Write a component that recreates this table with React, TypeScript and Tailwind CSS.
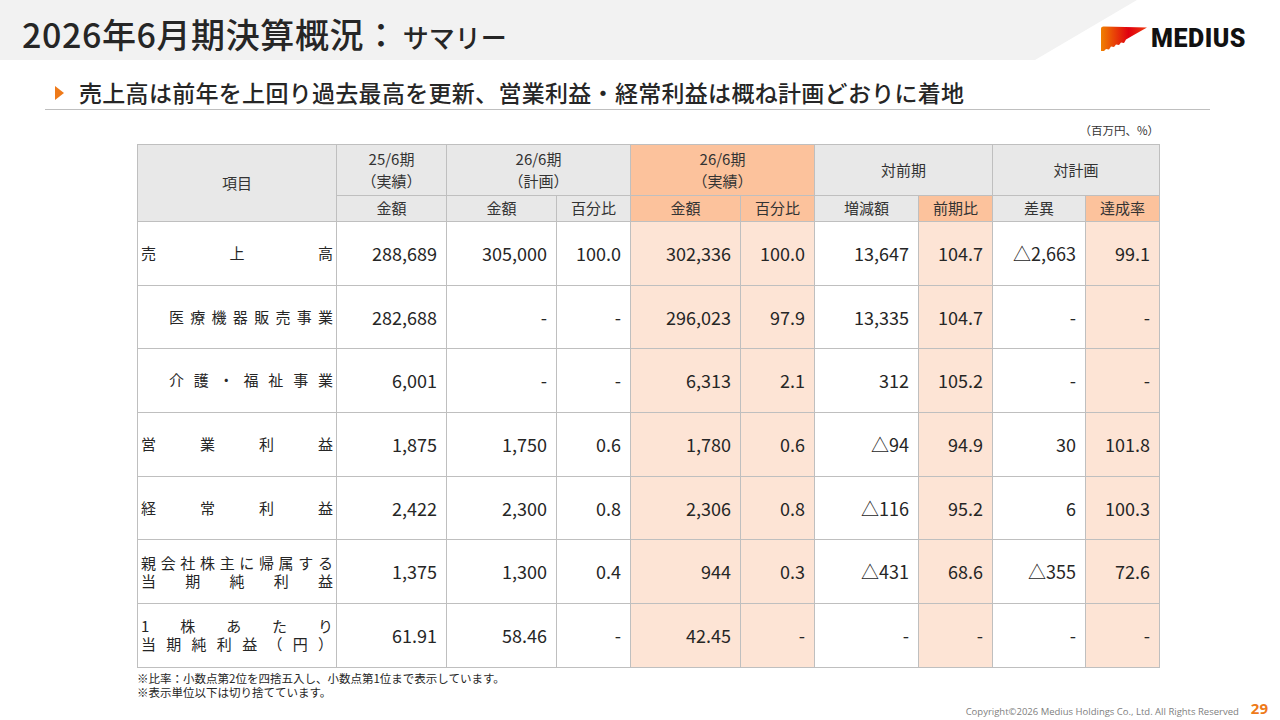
import React from "react";

const W = [199, 110, 110, 74, 110, 74, 104, 74, 93, 74];
const ORANGE_COLS = [3, 4, 6, 8];

type Row = { label: React.ReactNode; vals: string[] };

const Spread = ({ chars, className = "" }: { chars: string[]; className?: string }) => (
  <div className={`flex justify-between ${className}`}>
    {chars.map((c, i) => (
      <span key={i}>{c}</span>
    ))}
  </div>
);

const rows: Row[] = [
  { label: <Spread chars={["売", "上", "高"]} />, vals: ["288,689", "305,000", "100.0", "302,336", "100.0", "13,647", "104.7", "△2,663", "99.1"] },
  { label: <Spread className="pl-[28px]" chars={["医", "療", "機", "器", "販", "売", "事", "業"]} />, vals: ["282,688", "-", "-", "296,023", "97.9", "13,335", "104.7", "-", "-"] },
  { label: <Spread className="pl-[28px]" chars={["介", "護", "・", "福", "祉", "事", "業"]} />, vals: ["6,001", "-", "-", "6,313", "2.1", "312", "105.2", "-", "-"] },
  { label: <Spread chars={["営", "業", "利", "益"]} />, vals: ["1,875", "1,750", "0.6", "1,780", "0.6", "△94", "94.9", "30", "101.8"] },
  { label: <Spread chars={["経", "常", "利", "益"]} />, vals: ["2,422", "2,300", "0.8", "2,306", "0.8", "△116", "95.2", "6", "100.3"] },
  {
    label: (
      <div className="leading-[18px]">
        <Spread chars={["親", "会", "社", "株", "主", "に", "帰", "属", "す", "る"]} />
        <Spread chars={["当", "期", "純", "利", "益"]} />
      </div>
    ),
    vals: ["1,375", "1,300", "0.4", "944", "0.3", "△431", "68.6", "△355", "72.6"],
  },
  {
    label: (
      <div className="leading-[18px]">
        <Spread chars={["1", "株", "あ", "た", "り"]} />
        <Spread chars={["当", "期", "純", "利", "益", "（", "円", "）"]} />
      </div>
    ),
    vals: ["61.91", "58.46", "-", "42.45", "-", "-", "-", "-", "-"],
  },
];

const th = "border border-[#bfbfbf] font-normal text-[#333] text-[15px]";
const gray = "bg-[#e8e8e8]";
const orange = "bg-[#fcc29c]";

function Logo() {
  return (
    <svg width="46" height="25" viewBox="0 0 46 25">
      <defs>
        <linearGradient id="lg" x1="0" x2="1" y1="0" y2="0">
          <stop offset="0" stopColor="#f08000" />
          <stop offset="0.6" stopColor="#e0000f" />
          <stop offset="1" stopColor="#ee3a10" />
        </linearGradient>
      </defs>
      <path
        d="M0,2.5 Q0,0.5 2.5,0.5 L46,1.5 L31,10 L25,13.5 L23,17 L20,16.5 L18,19 L15,18.5 L13,21 L10,20.5 L8,23.5 L5,23 L3,25 L0,25 Z"
        fill="url(#lg)"
      />
    </svg>
  );
}

export default function App() {
  return (
    <div
      className="w-[1280px] h-[720px] bg-white overflow-hidden text-[#262626]"
      style={{ fontFamily: '"Noto Sans CJK JP", "Noto Sans", sans-serif' }}
    >
      {/* Header */}
      <div className="relative h-[60px] flex items-center">
        <div className="absolute inset-0 bg-[#f2f2f2] [clip-path:polygon(0_0,1137px_0,1035px_100%,0_100%)]" />
        <div className="relative pl-[22px] flex items-baseline pt-[6px]">
          <span className="text-[34px] font-medium tracking-[0.6px]">2026年6月期決算概況：</span>
          <span className="text-[26px] font-medium ml-[4px]">サマリー</span>
        </div>
        <div className="relative ml-auto mr-[34px] flex items-center gap-[4px] pt-[16px]">
          <Logo />
          <span
            className="text-[25px] font-black text-[#111] tracking-[0.5px] leading-none"
            style={{ fontFamily: 'Roboto, "Liberation Sans", sans-serif' }}
          >
            MEDIUS
          </span>
        </div>
      </div>

      {/* Subtitle */}
      <div className="ml-[45px] w-[1165px] mt-[12px] h-[38px] border-b border-[#bfbfbf] flex items-center pl-[10px] gap-[15px] pt-[4px]">
        <div className="w-0 h-0 border-y-[7px] border-y-transparent border-l-[9px] border-l-[#ee7a1a]" />
        <span className="text-[23px] font-medium tracking-[0.3px]">
          売上高は前年を上回り過去最高を更新、営業利益・経常利益は概ね計画どおりに着地
        </span>
      </div>

      {/* Table block */}
      <div className="ml-[137px] w-[1022px]">
        <div className="h-[34px] flex items-end justify-end pb-[5px] pr-0 text-[11.5px] text-[#333]">（百万円、%）</div>
        <table className="border-collapse table-fixed w-[1022px]">
          <colgroup>
            {W.map((w, i) => (
              <col key={i} style={{ width: w }} />
            ))}
          </colgroup>
          <thead>
            <tr className="h-[51px]">
              <th rowSpan={2} className={`${th} ${gray}`}>項目</th>
              <th className={`${th} ${gray} leading-[22px]`}>25/6期<br />（実績）</th>
              <th colSpan={2} className={`${th} ${gray} leading-[22px]`}>26/6期<br />（計画）</th>
              <th colSpan={2} className={`${th} ${orange} leading-[22px]`}>26/6期<br />（実績）</th>
              <th colSpan={2} className={`${th} ${gray}`}>対前期</th>
              <th colSpan={2} className={`${th} ${gray}`}>対計画</th>
            </tr>
            <tr className="h-[26px]">
              <th className={`${th} ${gray}`}>金額</th>
              <th className={`${th} ${gray}`}>金額</th>
              <th className={`${th} ${gray}`}>百分比</th>
              <th className={`${th} ${orange}`}>金額</th>
              <th className={`${th} ${orange}`}>百分比</th>
              <th className={`${th} ${gray}`}>増減額</th>
              <th className={`${th} ${orange}`}>前期比</th>
              <th className={`${th} ${gray}`}>差異</th>
              <th className={`${th} ${orange}`}>達成率</th>
            </tr>
          </thead>
          <tbody>
            {rows.map((r, ri) => (
              <tr key={ri} className="h-[63.7px]">
                <td className="border border-[#bfbfbf] px-[3px] text-[15px] text-[#262626]">{r.label}</td>
                {r.vals.map((v, vi) => (
                  <td
                    key={vi}
                    className={`border border-[#bfbfbf] text-right pr-[9px] text-[18px] ${
                      ORANGE_COLS.includes(vi) ? "bg-[#fde4d5]" : "bg-white"
                    }`}
                  >
                    {v}
                  </td>
                ))}
              </tr>
            ))}
          </tbody>
        </table>
        <div className="mt-[3px] text-[11.5px] leading-[14px] text-[#262626]">
          <div>※比率：小数点第2位を四捨五入し、小数点第1位まで表示しています。</div>
          <div>※表示単位以下は切り捨てています。</div>
        </div>
      </div>

      {/* Footer */}
      <div className="flex items-center justify-end pr-[12px] gap-[12px] h-[20px] leading-none">
        <span className="text-[9.5px] text-[#808080] pt-[6px]" style={{ fontFamily: '"Open Sans", sans-serif' }}>
          Copyright©2026 Medius Holdings Co., Ltd. All Rights Reserved
        </span>
        <span className="text-[15px] font-bold text-[#ee7a1a]" style={{ fontFamily: '"Open Sans", sans-serif' }}>
          29
        </span>
      </div>
    </div>
  );
}
